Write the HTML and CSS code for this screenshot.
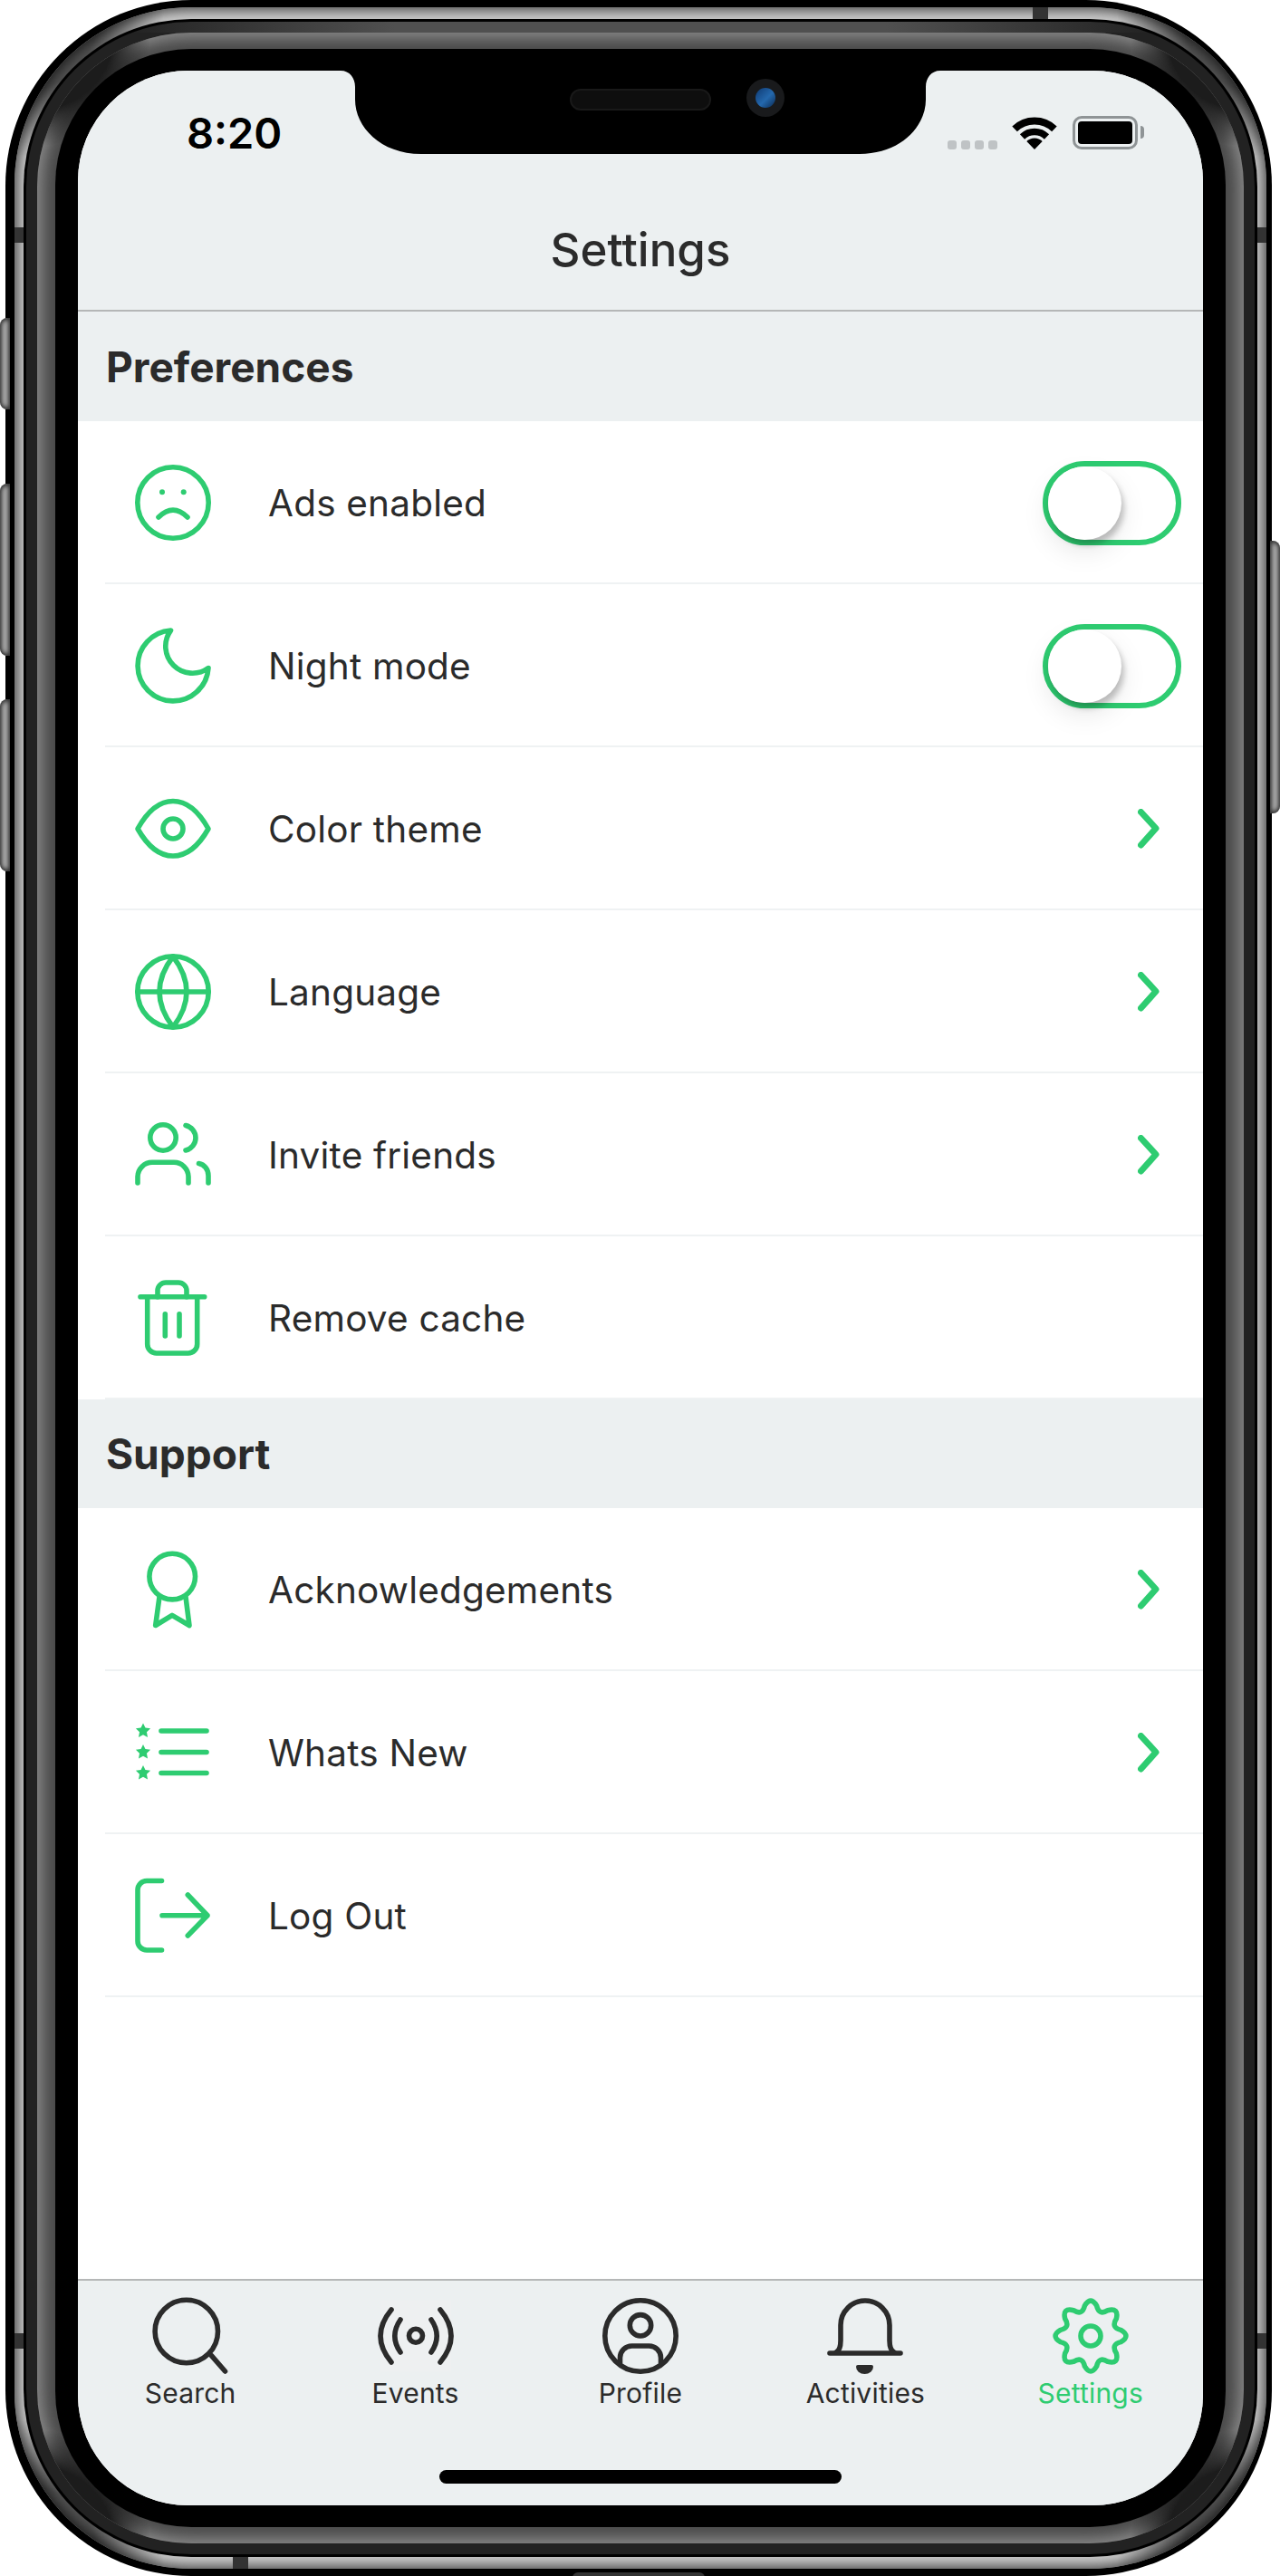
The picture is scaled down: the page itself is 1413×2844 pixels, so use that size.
FILE: index.html
```html
<!DOCTYPE html>
<html lang="en">
<head>
  <meta charset="UTF-8">
  <title>Settings</title>
  <link rel="stylesheet" href="styles.css">
</head>
<body>
  <div class="device">
    <span class="side-btn side-btn-mute"></span>
    <span class="side-btn side-btn-up"></span>
    <span class="side-btn side-btn-down"></span>
    <span class="side-btn side-btn-power"></span>
    <span class="antenna antenna-top"></span>
    <span class="antenna antenna-bottom"></span>
    <span class="antenna antenna-left1"></span>
    <span class="antenna antenna-left2"></span>
    <span class="antenna antenna-right1"></span>
    <span class="antenna antenna-right2"></span>
    <span class="bottom-bump"></span>

    <div class="bezel">
      <div class="steel">
        <div class="steel-gap">
          <div class="dark-ring">
            <div class="band">
              <div class="glass">
                <div class="screen">

                  <!-- notch -->
                  <div class="notch">
                    <svg class="notch-shape" width="664" height="92" viewBox="0 0 664 92">
                      <path d="M0 0C10 0 16 8 16 18V32C16 62 44 92 89 92H573C618 92 646 62 646 32V18C646 8 652 0 662 0Z"/>
                    </svg>
                    <span class="speaker"></span>
                    <span class="camera"><span class="lens"></span></span>
                  </div>

                  <header class="nav">
                    <div class="status-bar">
                      <span class="time">8:20</span>
                      <div class="status-icons">
                        <div class="signal"><i></i><i></i><i></i><i></i></div>
                        <svg class="wifi" width="50" height="36" viewBox="0 0 50 36">
                          <path class="wifi-arc" stroke-width="8" d="M3.1 13.3A31.5 31.5 0 0 1 46.9 13.3"/>
                          <path class="wifi-arc" stroke-width="7.5" d="M11.5 22A19.5 19.5 0 0 1 38.5 22"/>
                          <path d="M25 36L16.3 27A12.5 12.5 0 0 1 33.7 27Z"/>
                        </svg>
                        <div class="battery-wrap">
                          <div class="battery"><span class="battery-fill"></span></div>
                          <span class="battery-cap"></span>
                        </div>
                      </div>
                    </div>
                    <h1 class="nav-title">Settings</h1>
                  </header>

                  <main class="settings">
                    <h2 class="section-title section-first">Preferences</h2>

                    <div class="row">
                      <svg class="icon" viewBox="0 0 84 84"><circle cx="42" cy="42" r="39.2"/><path d="M26 58Q42 42 58 58"/><circle class="dot" cx="30" cy="30.3" r="3"/><circle class="dot" cx="53.7" cy="30.3" r="3"/></svg>
                      <span class="row-label">Ads enabled</span>
                      <div class="toggle"><span class="knob"></span></div>
                    </div>
                    <div class="row">
                      <svg class="icon" viewBox="0 0 84 84"><path d="M39.5 3A39 39 0 1 0 81 44.5A29.7 29.7 0 0 1 39.5 3Z"/></svg>
                      <span class="row-label">Night mode</span>
                      <div class="toggle"><span class="knob"></span></div>
                    </div>
                    <div class="row">
                      <svg class="icon" viewBox="0 0 84 84"><path d="M3 42Q20 11.5 42 11.5Q64 11.5 81 42Q64 72 42 72Q20 72 3 42Z"/><circle cx="42" cy="42" r="11"/></svg>
                      <span class="row-label">Color theme</span>
                      <svg class="chevron" viewBox="0 0 24 44"><path d="M3.5 3.5L20 21.5L3.5 40"/></svg>
                    </div>
                    <div class="row">
                      <svg class="icon" viewBox="0 0 84 84"><circle cx="42" cy="42" r="39.2"/><path d="M3 42H81"/><path d="M42 3Q12 42 42 81Q72 42 42 3Z"/></svg>
                      <span class="row-label">Language</span>
                      <svg class="chevron" viewBox="0 0 24 44"><path d="M3.5 3.5L20 21.5L3.5 40"/></svg>
                    </div>
                    <div class="row">
                      <svg class="icon" viewBox="0 0 84 84"><circle cx="31" cy="23" r="14.2"/><path d="M56 9.5A14.1 14.1 0 0 1 56 37"/><path d="M3 73V66A16 16 0 0 1 19 50.3H43A16 16 0 0 1 59 66V73"/><path d="M70.5 51.5C76.5 52.5 81 58 81 65V73"/></svg>
                      <span class="row-label">Invite friends</span>
                      <svg class="chevron" viewBox="0 0 24 44"><path d="M3.5 3.5L20 21.5L3.5 40"/></svg>
                    </div>
                    <div class="row">
                      <svg class="icon" viewBox="0 0 84 84"><path d="M6 18.7H76.7"/><path d="M25 18.7V12A9 9 0 0 1 34 3H48A9 9 0 0 1 57 12V18.7"/><path d="M13.7 18.7V71A10 10 0 0 0 23.7 81H58.7A10 10 0 0 0 68.7 71V18.7"/><path d="M33.3 37.7V62M49 37.7V62"/></svg>
                      <span class="row-label">Remove cache</span>
                    </div>

                    <h2 class="section-title">Support</h2>

                    <div class="row">
                      <svg class="icon" viewBox="0 0 84 84"><circle cx="41.2" cy="27.6" r="25.3"/><path d="M27 50L22.7 81.5L41 70.4L60 81.5L56 50"/></svg>
                      <span class="row-label">Acknowledgements</span>
                      <svg class="chevron" viewBox="0 0 24 44"><path d="M3.5 3.5L20 21.5L3.5 40"/></svg>
                    </div>
                    <div class="row">
                      <svg class="icon" viewBox="0 0 84 84">
                        <path d="M29 18H79M29 41.5H79M29 64.5H79"/>
                        <path class="solid" d="M9 9.5l2.47 5.1 5.61.77-4.09 3.93 1.01 5.58-5-2.68-5 2.68 1.01-5.58-4.09-3.93 5.61-.77z"/>
                        <path class="solid" d="M9 33l2.47 5.1 5.61.77-4.09 3.93 1.01 5.58-5-2.68-5 2.68 1.01-5.58-4.09-3.93 5.61-.77z"/>
                        <path class="solid" d="M9 56l2.47 5.1 5.61.77-4.09 3.93 1.01 5.58-5-2.68-5 2.68 1.01-5.58-4.09-3.93 5.61-.77z"/>
                      </svg>
                      <span class="row-label">Whats New</span>
                      <svg class="chevron" viewBox="0 0 24 44"><path d="M3.5 3.5L20 21.5L3.5 40"/></svg>
                    </div>
                    <div class="row">
                      <svg class="icon" viewBox="0 0 84 84"><path d="M29.5 3.5H13A10 10 0 0 0 3 13.5V70A10 10 0 0 0 13 80H29.5"/><path d="M30 41.7H80M58.3 19L80 41.7L58.3 64"/></svg>
                      <span class="row-label">Log Out</span>
                    </div>
                  </main>

                  <footer class="tabbar">
                    <nav class="tabs">
                      <div class="tab">
                        <svg class="icon" viewBox="0 0 84 84"><circle cx="37.8" cy="37" r="34.7"/><path d="M65.4 63.7L80.5 81"/></svg>
                        <span class="tab-label">Search</span>
                      </div>
                      <div class="tab">
                        <svg class="icon" viewBox="0 0 84 84"><rect class="events-bg" x="3" y="3" width="78" height="78"/><circle cx="42" cy="41.7" r="7.5"/><path d="M25 24Q12.6 42 25 60M59 24Q71.4 42 59 60"/><path d="M15 13Q-9 42 15 71M69 13Q93 42 69 71"/></svg>
                        <span class="tab-label">Events</span>
                      </div>
                      <div class="tab">
                        <svg class="icon" viewBox="0 0 84 84"><circle cx="42" cy="42" r="39.2"/><circle cx="42" cy="30.3" r="11.7"/><path d="M19.5 72V66A13 13 0 0 1 32.5 53H51.5A13 13 0 0 1 64.5 66V72"/></svg>
                        <span class="tab-label">Profile</span>
                      </div>
                      <div class="tab">
                        <svg class="icon" viewBox="0 0 84 84"><path d="M10 60C14 58 15 53 15 47V30A27 27 0 0 1 69 30V47C69 53 70 58 74 60"/><path d="M3 61H81"/><path class="solid" d="M32 76A2 2 0 0 1 34 74H49A2 2 0 0 1 51 76A9.5 8 0 0 1 32 76Z"/></svg>
                        <span class="tab-label">Activities</span>
                      </div>
                      <div class="tab tab-active">
                        <svg class="icon" viewBox="0 0 84 84"><path d="M35.37 8.65Q42 -2.5 48.63 8.65Q51.18 19.83 60.89 13.73Q73.47 10.53 70.27 23.11Q64.17 32.82 75.35 35.37Q86.5 42 75.35 48.63Q64.17 51.18 70.27 60.89Q73.47 73.47 60.89 70.27Q51.18 64.17 48.63 75.35Q42 86.5 35.37 75.35Q32.82 64.17 23.11 70.27Q10.53 73.47 13.73 60.89Q19.83 51.18 8.65 48.63Q-2.5 42 8.65 35.37Q19.83 32.82 13.73 23.11Q10.53 10.53 23.11 13.73Q32.82 19.83 35.37 8.65Z"/><circle cx="42" cy="42" r="11"/></svg>
                        <span class="tab-label">Settings</span>
                      </div>
                    </nav>
                    <span class="home-indicator"></span>
                  </footer>

                </div>
              </div>
            </div>
          </div>
        </div>
      </div>
    </div>
  </div>
</body>
</html>
```

FILE: styles.css
```css
* {
  box-sizing: border-box;
}

body {
  margin: 0;
  background-color: #fff;
  font-family: Inter, "Noto Sans", sans-serif;
  color: #2b2b2b;
}

/* phone body, ring inside ring */
.device {
  position: relative;
  width: 1413px;
  height: 2844px;
  padding: 0 9px 0 6px;
  overflow: hidden;
}

.bezel {
  height: 100%;
  padding: 8px 6px 8px 10px;
  border-radius: 205px;
  background-color: #000;
}

.steel {
  position: relative;
  height: 100%;
  padding: 13px 10px;
  border-radius: 195px;
  background-color: #cbcbcb;
  box-shadow: inset 0 0 14px 3px #444;
}

.steel::before {
  content: "";
  position: absolute;
  inset: 0;
  border-radius: inherit;
  background:
    radial-gradient(circle at 0 0, rgba(0, 0, 0, 0.6) 95px, transparent 165px),
    radial-gradient(circle at 100% 0, rgba(0, 0, 0, 0.6) 95px, transparent 165px),
    radial-gradient(circle at 0 100%, rgba(0, 0, 0, 0.6) 95px, transparent 165px),
    radial-gradient(circle at 100% 100%, rgba(0, 0, 0, 0.6) 95px, transparent 165px);
}

.steel-gap {
  position: relative;
  height: 100%;
  padding: 3px;
  border-radius: 185px;
  background-color: #000;
}

.dark-ring {
  height: 100%;
  padding: 12px;
  border-radius: 182px;
  background: linear-gradient(to right, #222 8%, #505050 30%, #505050 70%, #222 92%) top center / 100% 12px no-repeat, #222;
}

.band {
  position: relative;
  height: 100%;
  padding: 18px 20px;
  border-radius: 170px;
  background-color: #4a4a4a;
  box-shadow: inset 0 0 16px 6px #8a8a8a;
}

.band::before {
  content: "";
  position: absolute;
  inset: 0;
  border-radius: inherit;
  background:
    radial-gradient(circle at 0 0, #1c1c1c 85px, transparent 125px),
    radial-gradient(circle at 100% 0, #1c1c1c 85px, transparent 125px),
    radial-gradient(circle at 0 100%, #1c1c1c 85px, transparent 125px),
    radial-gradient(circle at 100% 100%, #1c1c1c 85px, transparent 125px);
}

.glass {
  position: relative;
  height: 100%;
  padding: 24px 25px;
  border-radius: 150px;
  background-color: #000;
}

.screen {
  position: relative;
  display: flex;
  flex-direction: column;
  width: 1242px;
  height: 2688px;
  border-radius: 122px;
  background-color: #fff;
  overflow: hidden;
}

/* side buttons and antenna lines */
.side-btn {
  position: absolute;
  width: 11px;
  background-color: #b4b4b4;
  box-shadow: inset 0 0 5px 2px #2a2a2a;
}

.side-btn-mute, .side-btn-up, .side-btn-down {
  left: 0;
  border-radius: 8px 0 0 8px;
}

.side-btn-mute { top: 351px; height: 101px; }
.side-btn-up { top: 534px; height: 190px; }
.side-btn-down { top: 772px; height: 190px; }

.side-btn-power {
  top: 597px;
  right: 0;
  height: 301px;
  border-radius: 0 8px 8px 0;
}

.antenna {
  position: absolute;
  z-index: 1;
  background-color: #333;
}

.antenna-top { top: 8px; left: 1140px; width: 17px; height: 13px; }
.antenna-bottom { top: 2823px; left: 257px; width: 17px; height: 13px; }
.antenna-left1 { top: 251px; left: 16px; width: 10px; height: 17px; }
.antenna-left2 { top: 2576px; left: 16px; width: 10px; height: 17px; }
.antenna-right1 { top: 251px; left: 1388px; width: 10px; height: 17px; }
.antenna-right2 { top: 2576px; left: 1388px; width: 10px; height: 17px; }

.bottom-bump {
  position: absolute;
  z-index: 1;
  top: 2840px;
  left: 632px;
  width: 146px;
  height: 6px;
  border-radius: 6px 6px 0 0;
  background-color: #333;
}

/* notch */
.notch {
  position: absolute;
  top: 0;
  left: 290px;
  width: 664px;
  height: 92px;
}

.notch-shape {
  display: block;
  fill: #000;
}

.speaker {
  position: absolute;
  top: 20px;
  left: 253px;
  width: 156px;
  height: 24px;
  border-radius: 12px;
  background-color: #0e0e0e;
  border: 2px solid #191919;
}

.camera {
  position: absolute;
  top: 9px;
  left: 448px;
  display: flex;
  align-items: center;
  justify-content: center;
  width: 42px;
  height: 42px;
  border-radius: 50%;
  background-color: #191a1c;
}

.lens {
  width: 22px;
  height: 22px;
  border-radius: 50%;
  background: linear-gradient(135deg, #0f3a72, #2468ad 55%, #0b2a52);
}

/* top bar */
.nav {
  flex: none;
  height: 266px;
  border-bottom: 2px solid #b5b7b7;
  background-color: #ecf0f1;
}

.status-bar {
  display: flex;
  align-items: center;
  height: 136px;
  padding: 0 65px 0 120px;
}

.time {
  font-size: 47px;
  font-weight: 600;
  color: #000;
}

.status-icons {
  display: flex;
  align-items: flex-end;
  margin-left: auto;
}

.signal {
  display: flex;
  gap: 4.5px;
  margin-right: 16px;
}

.signal i {
  display: block;
  width: 10.5px;
  height: 10px;
  margin-top: 26px;
  border-radius: 3px;
  background-color: #bfc3c5;
}

.wifi {
  display: block;
  margin-right: 17px;
  fill: #000;
}

.wifi-arc {
  fill: none;
  stroke: #000;
}

.battery-wrap {
  display: flex;
  align-items: center;
}

.battery {
  display: flex;
  width: 72px;
  height: 37px;
  padding: 3px;
  border: 3px solid #8f9496;
  border-radius: 10px;
}

.battery-fill {
  flex: 1;
  border-radius: 4px;
  background-color: #000;
}

.battery-cap {
  width: 4px;
  height: 14px;
  margin-left: 3px;
  border-radius: 0 4px 4px 0;
  background-color: #8f9496;
}

.nav-title {
  margin: 0;
  font-size: 51px;
  font-weight: 500;
  line-height: 124px;
  text-align: center;
}

/* list */
.settings {
  flex: 1;
}

.section-title {
  display: flex;
  align-items: center;
  height: 120px;
  margin: 0;
  padding-left: 31px;
  font-size: 46px;
  font-weight: 700;
  background-color: #ecf0f1;
}

.section-first {
  height: 121px;
}

.row {
  display: flex;
  align-items: center;
  height: 180px;
  margin-left: 30px;
  padding: 2px 24px 0 33px;
  border-bottom: 2px solid #eff2f3;
}

.row > .icon {
  color: #2ecc71;
}

.row-label {
  margin-left: 63px;
  font-size: 40.5px;
  font-weight: 400;
  letter-spacing: 0.2px;
}

.icon {
  display: block;
  flex: none;
  width: 84px;
  height: 84px;
  overflow: visible;
  fill: none;
  stroke: currentColor;
  stroke-width: 5.6;
  stroke-linecap: round;
  stroke-linejoin: round;
}

.icon .dot, .icon .solid {
  fill: currentColor;
  stroke: none;
}

.icon .events-bg {
  fill: #eef0f1;
  stroke: none;
}

.chevron {
  flex: none;
  width: 24px;
  height: 44px;
  margin: 0 24px 0 auto;
  fill: none;
  stroke: #2ecc71;
  stroke-width: 7;
  stroke-linecap: round;
  stroke-linejoin: round;
}

.toggle {
  display: flex;
  align-items: center;
  width: 153px;
  height: 93px;
  margin-left: auto;
  border: 6px solid #2ecc71;
  border-radius: 47px;
  background-color: #fff;
}

.knob {
  width: 81px;
  height: 81px;
  border-radius: 50%;
  background-color: #fff;
  box-shadow: 3px 6px 6px rgba(0, 0, 0, 0.22), 0 12px 30px rgba(0, 0, 0, 0.1);
}

/* bottom tabs */
.tabbar {
  flex: none;
  display: flex;
  flex-direction: column;
  height: 250px;
  border-top: 2px solid #b5b7b7;
  background-color: #ecf0f1;
}

.tabs {
  display: grid;
  grid-template-columns: repeat(5, 1fr);
  padding-top: 19px;
}

.tab {
  display: flex;
  flex-direction: column;
  align-items: center;
}

.tab-label {
  margin-top: 3px;
  font-size: 30px;
  line-height: 36px;
  letter-spacing: 0.2px;
}

.tab-active {
  color: #2ecc71;
}

.home-indicator {
  align-self: center;
  width: 444px;
  height: 15px;
  margin-top: auto;
  margin-bottom: 24px;
  border-radius: 8px;
  background-color: #000;
}
```
